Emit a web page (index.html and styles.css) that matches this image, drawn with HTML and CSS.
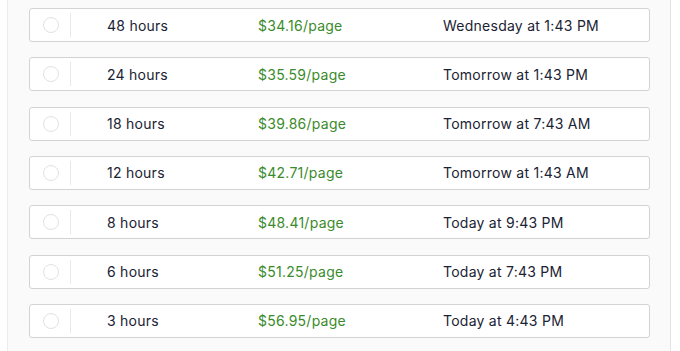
FILE: index.html
```html
<!DOCTYPE html>
<html>
<head>
<meta charset="utf-8">
<link rel="stylesheet" href="styles.css">
</head>
<body>
<div class="panel">
  <div class="row"><span class="radio"></span><span class="sep"></span><span class="hours">48 hours</span><span class="price">$34.16/page</span><span class="due">Wednesday at 1:43 PM</span></div>
  <div class="row"><span class="radio"></span><span class="sep"></span><span class="hours">24 hours</span><span class="price">$35.59/page</span><span class="due">Tomorrow at 1:43 PM</span></div>
  <div class="row"><span class="radio"></span><span class="sep"></span><span class="hours">18 hours</span><span class="price">$39.86/page</span><span class="due">Tomorrow at 7:43 AM</span></div>
  <div class="row"><span class="radio"></span><span class="sep"></span><span class="hours">12 hours</span><span class="price">$42.71/page</span><span class="due">Tomorrow at 1:43 AM</span></div>
  <div class="row"><span class="radio"></span><span class="sep"></span><span class="hours">8 hours</span><span class="price">$48.41/page</span><span class="due">Today at 9:43 PM</span></div>
  <div class="row"><span class="radio"></span><span class="sep"></span><span class="hours">6 hours</span><span class="price">$51.25/page</span><span class="due">Today at 7:43 PM</span></div>
  <div class="row"><span class="radio"></span><span class="sep"></span><span class="hours">3 hours</span><span class="price">$56.95/page</span><span class="due">Today at 4:43 PM</span></div>
</div>
</body>
</html>
```
FILE: styles.css
```css
html, body {
  margin: 0;
  padding: 0;
  background: #ffffff;
}
body {
  font-family: Inter, "Open Sans", "Liberation Sans", sans-serif;
  font-size: 14px;
  letter-spacing: 0.25px;
  color: #1a2233;
}
.panel {
  margin-left: 7px;
  width: 664px;
  height: 351px;
  box-sizing: border-box;
  background: #fafafa;
  border-left: 1px solid #ececec;
  border-right: 1px solid #e3e3e3;
  padding: 8px 20px 0 21px;
  display: flex;
  flex-direction: column;
  gap: 15.33px;
}
.row {
  height: 34px;
  box-sizing: border-box;
  background: #ffffff;
  border: 1px solid #d3d3d3;
  border-radius: 3px;
  display: grid;
  grid-template-columns: 40px 1px 187px 185px 1fr;
  align-items: center;
}
.radio {
  justify-self: center;
  width: 16px;
  height: 16px;
  box-sizing: border-box;
  border: 1.5px solid #dfe2e7;
  border-radius: 50%;
  margin-left: 1px;
}
.sep {
  align-self: stretch;
  margin: 4px 0;
  background: #e8e8e8;
}
.hours {
  padding-left: 36px;
}
.price {
  color: #3b8b2c;
}
```
